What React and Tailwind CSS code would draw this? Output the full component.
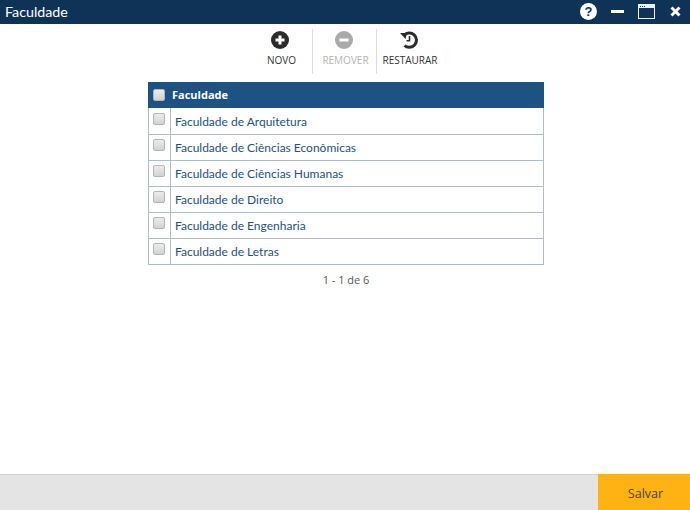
import React from 'react';

const faculdades = [
  'Faculdade de Arquitetura',
  'Faculdade de Ciências Econômicas',
  'Faculdade de Ciências Humanas',
  'Faculdade de Direito',
  'Faculdade de Engenharia',
  'Faculdade de Letras',
];

const Check = ({ className = '' }) => (
  <span className={`block w-[12px] h-[12px] rounded-[2px] border border-[#b4b4b4] bg-gradient-to-b from-[#ececec] to-[#d2d2d2] ${className}`} />
);

const ToolButton = ({ label, muted, border, children }) => (
  <div className={`w-[64px] h-[45px] flex flex-col items-center ${border ? 'border-r border-[#dcdcdc]' : ''}`}>
    <div className="h-[20px]">{children}</div>
    <span className={`mt-[5px] ml-[2px] text-[10px] leading-[13px] whitespace-nowrap ${muted ? 'text-[#b5b5b5]' : 'text-[#333333]'}`}>{label}</span>
  </div>
);

const App = () => {
  return (
    <div className="w-full h-screen bg-white flex flex-col overflow-hidden font-['Open_Sans',sans-serif]">
      {/* Title bar */}
      <div className="h-[24px] shrink-0 bg-[#0e3357] flex items-center justify-between pl-[5px] pr-[9px]">
        <span className="text-white text-[14.25px] leading-[20px] font-['Lato',sans-serif]">Faculdade</span>
        <div className="flex items-center pb-[1px]">
          <svg width="17" height="17" viewBox="0 0 17 17" className="mr-[14px]">
            <circle cx="8.5" cy="8.5" r="8.5" fill="#fff" />
            <text x="8.5" y="13" textAnchor="middle" fontSize="13" fontWeight="700" fill="#0e3357" fontFamily="Liberation Sans">?</text>
          </svg>
          <span className="block w-[13px] h-[3px] bg-white mr-[14px]" />
          <svg width="17" height="15" viewBox="0 0 17 15" className="mr-[15px]">
            <rect x="0.5" y="0.5" width="16" height="14" fill="none" stroke="#e8eef3" />
            <rect x="1" y="1" width="15" height="3" fill="#e8eef3" />
            <rect x="2" y="2" width="1" height="1" fill="#0e3357" />
            <rect x="4" y="2" width="1" height="1" fill="#0e3357" />
            <rect x="6" y="2" width="1" height="1" fill="#0e3357" />
          </svg>
          <svg width="11" height="11" viewBox="0 0 11 11">
            <path d="M1.5 1.5 L9.5 9.5 M9.5 1.5 L1.5 9.5" stroke="#fff" strokeWidth="3" />
          </svg>
        </div>
      </div>

      {/* Toolbar */}
      <div className="mt-[5px] flex justify-center h-[45px] shrink-0">
        <ToolButton label="NOVO" border>
          <svg width="18" height="18" viewBox="0 0 18 18" className="mt-[2px] -ml-[1px]">
            <circle cx="9" cy="9" r="9" fill="#2b2b2b" />
            <path d="M9 4.5 V13.5 M4.5 9 H13.5" stroke="#fff" strokeWidth="3" />
          </svg>
        </ToolButton>
        <ToolButton label="REMOVER" muted border>
          <svg width="18" height="18" viewBox="0 0 18 18" className="mt-[2px] -ml-[1px]">
            <circle cx="9" cy="9" r="9" fill="#a9a9a9" />
            <path d="M4.5 9 H13.5" stroke="#fff" strokeWidth="3" />
          </svg>
        </ToolButton>
        <ToolButton label="RESTAURAR">
          <svg width="20" height="18" viewBox="0 0 20 18" className="mt-[2px]">
            <path d="M5 4.2 A7.2 7.2 0 1 1 5.5 14.5" fill="none" stroke="#2b2b2b" strokeWidth="3" />
            <path d="M1 2 L8 2 L6.5 8 Z" fill="#2b2b2b" />
            <path d="M10.5 5 V9.8 H7.5" fill="none" stroke="#2b2b2b" strokeWidth="1.6" />
          </svg>
        </ToolButton>
      </div>

      {/* Table */}
      <div className="mt-[8px] ml-[148px] w-[396px]">
        <div className="h-[26px] bg-[#1c5284] flex items-center pl-[5px]">
          <Check />
          <span className="ml-[7px] text-white text-[11px] font-bold leading-[14px]">Faculdade</span>
        </div>
        <div className="border-x border-b border-[#adbfc4]">
          {faculdades.map((nome, i) => (
            <div key={nome} className={`h-[26px] flex ${i > 0 ? 'border-t border-[#adbfc4]' : ''}`}>
              <div className={`w-[22px] shrink-0 border-r border-[#adbfc4] pl-[4px] ${i > 0 ? 'pt-[4px]' : 'pt-[5px]'}`}>
                <Check />
              </div>
              <span className={`pl-[4px] font-['Lato',sans-serif] text-[12px] leading-[16px] text-[#1c5284] whitespace-nowrap ${i > 0 ? 'pt-[5px]' : 'pt-[6px]'}`}>{nome}</span>
            </div>
          ))}
        </div>
        <div className="mt-[8px] text-center text-[11px] leading-[14px] text-[#555555]">1 - 1 de 6</div>
      </div>

      {/* Footer */}
      <div className="mt-auto h-[36px] shrink-0 bg-[#e4e4e4] border-t border-[#cfcfcf] flex justify-end">
        <button className="w-[92px] mt-[-1px] pt-[5px] pl-[3px] bg-[#ffb214] text-[#444444] text-[12.5px]">Salvar</button>
      </div>
    </div>
  );
};

export default App;
